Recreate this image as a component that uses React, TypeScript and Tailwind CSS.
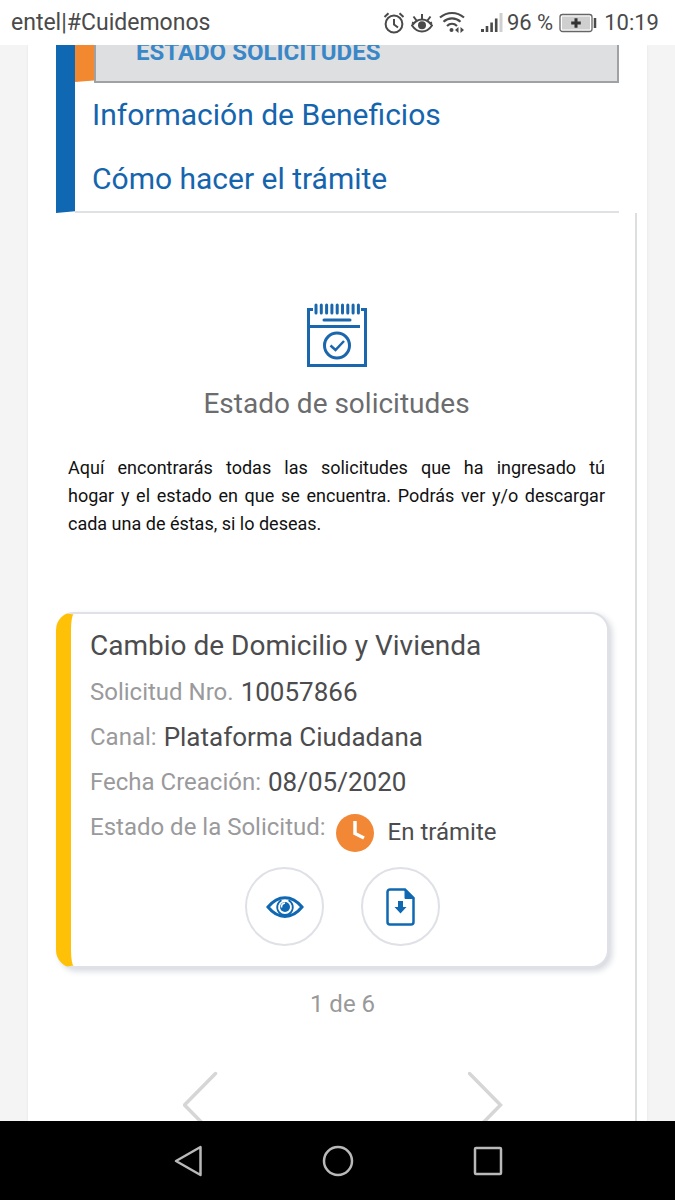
import React, { FC } from "react";

const details = [
  { label: "Solicitud Nro.", value: "10057866" },
  { label: "Canal:", value: "Plataforma Ciudadana" },
  { label: "Fecha Creación:", value: "08/05/2020" },
];

const StatusBar: FC = () => (
  <header className="flex h-[45px] shrink-0 items-center justify-between bg-white pr-4 pl-[11px] text-[22px] leading-6 text-[#4a4a4a]">
    <span className="text-[23px]">entel|#Cuidemonos</span>
    <div className="flex items-center">
      <svg className="h-6 w-[22px]" viewBox="0 0 22 24" fill="none" stroke="currentColor" strokeWidth="2">
        <circle cx="11" cy="13" r="8.4" />
        <path d="M11 8v5.500l4 3M1.500 6l4-3.800M20.500 6l-4-3.800" />
      </svg>
      <svg className="ml-1.5 h-6 w-[22px]" viewBox="0 0 22 24" fill="none" stroke="currentColor" strokeWidth="2">
        <path d="M1 14.500c5.500-8 14.500-8 20 0-5.500 8-14.500 8-20 0z" />
        <path d="M11 8V3M5.500 9.500L2.500 5.500M16.500 9.500l3-4M1 11.500l2.500 1.200M21 11.500l-2.500 1.200" />
        <circle cx="11" cy="14.300" r="4" fill="currentColor" stroke="none" />
      </svg>
      <svg className="ml-1.5 h-6 w-[26px]" viewBox="0 0 26 24" fill="none" stroke="currentColor" strokeWidth="2.200">
        <path d="M1 6.500c7-6 17-6 24 0M4.500 10.800c5-4.600 12-4.600 17 0M8 15c3-2.800 7-2.800 10 0" />
        <circle cx="12.500" cy="19" r="2" fill="currentColor" stroke="none" />
        <path d="M19.500 16v6l-3.500-3zM21.500 16v6l3.500-3z" fill="currentColor" stroke="none" />
      </svg>
      <svg className="ml-4 h-6 w-[22px]" viewBox="0 0 22 24" fill="currentColor">
        <path d="M0 18h3v3H0zM4.700 15h2.600v6H4.700zM9.300 11.500h2.600V21H9.300zM13.900 7.500h2.600V21h-2.600z" />
        <path d="M18.500 2h3v19h-3z" fill="#cfcfcf" />
      </svg>
      <span className="ml-1">96 %</span>
      <svg className="ml-1.5 h-6 w-[38px]" viewBox="0 0 38 24" fill="none">
        <rect x="1" y="3.500" width="32" height="17" rx="2.500" fill="#fff" stroke="#666" strokeWidth="1.300" />
        <rect x="3" y="5.500" width="28" height="13" fill="#cfcfcf" />
        <path d="M17 7.200v9.600M12.200 12h9.600" stroke="#333" strokeWidth="3" />
        <path d="M36 7v10" stroke="#4a4a4a" strokeWidth="2.500" />
      </svg>
      <span className="ml-[7px]">10:19</span>
    </div>
  </header>
);

const MenuNav: FC = () => (
  <nav className="mx-7 flex">
    <div className="w-[19px] shrink-0 bg-[#1068b3] [clip-path:polygon(0_0,100%_0,100%_99%,0_100%)]" />
    <ul className="flex-1 border-b-2 border-[#dfe1e4] text-[30px] leading-[64px] text-[#1565ae]">
      <li className="flex h-[38px] overflow-hidden">
        <div className="h-[37px] w-[19px] shrink-0 bg-[#f28830] [clip-path:polygon(0_0,100%_0,100%_96%,0_100%)]" />
        <a
          href="#estado"
          className="flex flex-1 items-end border-2 border-t-0 border-[#a0a1a3] bg-[#dedfe1] pb-[15px] pl-10 text-[24px] leading-7 font-bold text-[#3a87c8]"
        >
          ESTADO SOLICITUDES
        </a>
      </li>
      <li>
        <a href="#beneficios" className="block pl-[17px]">
          Información de Beneficios
        </a>
      </li>
      <li>
        <a href="#tramite" className="block pl-[17px]">
          Cómo hacer el trámite
        </a>
      </li>
    </ul>
  </nav>
);

const CalendarIcon: FC = () => (
  <svg className="h-[66px] w-[60px]" viewBox="0 0 60 66" fill="none" stroke="#1a67ad" strokeWidth="3">
    <path d="M6 7.500H1.500V63.500h57V7.500H54M3 24.500h50" />
    <path d="M17 18h26" strokeLinecap="round" />
    <path
      d="M9 3v8M14.300 3v8M19.600 3v8M24.900 3v8M30.200 3v8M35.500 3v8M40.800 3v8M46.100 3v8M51.400 3v8"
      strokeLinecap="round"
    />
    <circle cx="30" cy="43.500" r="12.500" />
    <path d="M23.500 43.500l5 4.500 8.500-9" strokeWidth="2.500" />
  </svg>
);

const RequestCard: FC = () => (
  <article className="rounded-[18px] border-2 border-l-[15px] border-[#dfe1e6] border-l-[#ffc107] bg-white pt-[9px] pr-3 pb-5 pl-[19px] text-[24px] leading-[45px] text-[#4c4c4e] shadow-[3px_3px_6px_#d5d8de]">
    <h2 className="text-[28px]">Cambio de Domicilio y Vivienda</h2>
    <dl className="pt-0.5">
      {details.map(({ label, value }) => (
        <div key={label} className="flex gap-[7px]">
          <dt className="text-[#9a9a9c]">{label}</dt>
          <dd className="text-[26px]">{value}</dd>
        </div>
      ))}
      <div className="flex">
        <dt className="text-[#9a9a9c]">Estado de la Solicitud:</dt>
        <dd className="flex items-center pt-[5px] pl-2.5">
          <svg className="size-[38px]" viewBox="0 0 38 38" fill="none">
            <circle cx="19" cy="19" r="19" fill="#f28735" />
            <path d="M19 7v12.500l9 4.500" stroke="#fff" strokeWidth="3.500" />
          </svg>
          <span className="pl-3.5">En trámite</span>
        </dd>
      </div>
    </dl>
    <div className="flex justify-center gap-[37px] pt-3">
      <button
        aria-label="Ver solicitud"
        className="flex size-[79px] items-center justify-center rounded-full border-2 border-[#dfe1e6]"
      >
        <svg className="h-6 w-[38px]" viewBox="0 0 38 24" fill="none" stroke="#1068b3">
          <path d="M2 12C12-.5 26-.5 36 12 26 24.500 12 24.500 2 12z" strokeWidth="3" />
          <path d="M15.500 5.200A7.800 7.800 0 1 0 22.500 5.200" strokeWidth="1.800" />
          <circle cx="19" cy="12" r="5" fill="#1068b3" stroke="none" />
          <path d="M15.500 12.500a4.200 4.200 0 0 1 3.500-4.500" stroke="#fff" strokeWidth="1.600" />
        </svg>
      </button>
      <button
        aria-label="Descargar solicitud"
        className="flex size-[79px] items-center justify-center rounded-full border-2 border-[#dfe1e6]"
      >
        <svg className="h-[38px] w-[29px]" viewBox="0 0 29 38" fill="none" stroke="#1068b3" strokeWidth="2.500">
          <path d="M19 1.500H4A2.500 2.500 0 0 0 1.500 4v30A2.500 2.500 0 0 0 4 36.500h21a2.500 2.500 0 0 0 2.500-2.500V10z" />
          <path d="M19 1v9.500h9z" fill="#1068b3" strokeWidth="1" />
          <path d="M12 13h5v6h3.500l-6 6.500-6-6.500H12z" fill="#1068b3" stroke="none" />
        </svg>
      </button>
    </div>
  </article>
);

const Pager: FC = () => (
  <div className="pt-4 pl-5 text-center text-[24px] leading-10 text-[#999]">
    <p>1 de 6</p>
    <div className="flex justify-center gap-[250px] pt-[47px]">
      <button aria-label="Anterior">
        <svg className="h-[66px] w-[35px]" viewBox="0 0 35 66" fill="none" stroke="#d6d6d6" strokeWidth="3.500">
          <path d="M32.500 2.500L1.500 34l31 31.500" strokeLinecap="round" />
        </svg>
      </button>
      <button aria-label="Siguiente">
        <svg className="h-[66px] w-[35px]" viewBox="0 0 35 66" fill="none" stroke="#d6d6d6" strokeWidth="3.500">
          <path d="M1.500 2.500L32.500 34l-31 31.500" strokeLinecap="round" />
        </svg>
      </button>
    </div>
  </div>
);

const SystemNav: FC = () => (
  <footer className="flex h-[79px] shrink-0 items-center justify-center gap-[118px] bg-black text-[#b9b9b9]">
    <button aria-label="Atrás">
      <svg className="size-8" viewBox="0 0 32 32" fill="none" stroke="currentColor" strokeWidth="2.500">
        <path d="M28.500 2v28L4 16z" strokeLinejoin="round" />
      </svg>
    </button>
    <button aria-label="Inicio">
      <svg className="size-8" viewBox="0 0 32 32" fill="none" stroke="currentColor" strokeWidth="2.500">
        <circle cx="16" cy="16" r="14" />
      </svg>
    </button>
    <button aria-label="Recientes">
      <svg className="size-8" viewBox="0 0 32 32" fill="none" stroke="currentColor" strokeWidth="2.500">
        <rect x="3" y="3" width="26" height="26" rx="1" />
      </svg>
    </button>
  </footer>
);

export default function App() {
  return (
    <div className="flex h-screen flex-col overflow-hidden bg-white font-[Roboto,sans-serif]">
      <StatusBar />
      <main className="min-h-0 flex-1 overflow-hidden bg-[#f4f4f4] px-7">
        <div className="min-h-full bg-white shadow-[0_0_2px_#e4e4e4]">
          <MenuNav />
          <section className="mr-2.5 border-r-2 border-[#dcdee0] pt-[89px] pr-[26px] pl-7">
            <div className="flex flex-col items-center pl-2">
              <CalendarIcon />
              <h1 className="pt-4 text-[28px] leading-10 text-[#6b6c6e]">Estado de solicitudes</h1>
            </div>
            <p className="pt-[30px] pr-1 pl-3 text-[18px] leading-7 text-[#111]">
              <span className="block [text-align-last:justify]">
                Aquí encontrarás todas las solicitudes que ha ingresado tú
              </span>{" "}
              <span className="block [text-align-last:justify]">
                hogar y el estado en que se encuentra. Podrás ver y/o descargar
              </span>{" "}
              cada una de éstas, si lo deseas.
            </p>
            <div className="pt-[74px]">
              <RequestCard />
            </div>
            <Pager />
          </section>
        </div>
      </main>
      <SystemNav />
    </div>
  );
}
